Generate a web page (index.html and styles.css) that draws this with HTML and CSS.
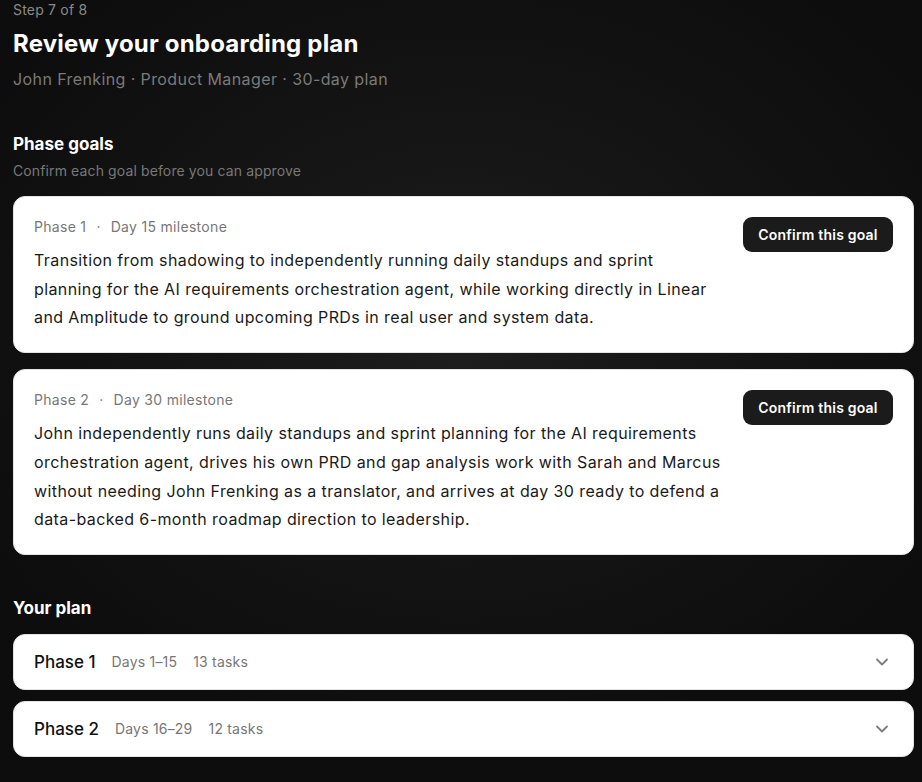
FILE: index.html
```html
<!DOCTYPE html>
<html lang="en">
<head>
<meta charset="utf-8">
<title>Review your onboarding plan</title>
<link rel="stylesheet" href="styles.css">
</head>
<body>
<main class="page">
  <header class="intro">
    <div class="step">Step 7 of 8</div>
    <h1 class="title">Review your onboarding plan</h1>
    <div class="subtitle">John Frenking · Product Manager · 30-day plan</div>
  </header>

  <section class="section">
    <h2 class="section-title">Phase goals</h2>
    <p class="section-hint">Confirm each goal before you can approve</p>

    <div class="goal-list">
      <article class="goal-card">
        <div class="goal-body">
          <div class="goal-meta"><span>Phase 1</span><span class="dot">·</span><span>Day 15 milestone</span></div>
          <p class="goal-text">Transition from shadowing to independently running daily standups and sprint planning for the AI requirements orchestration agent, while working directly in Linear and Amplitude to ground upcoming PRDs in real user and system data.</p>
        </div>
        <button class="confirm-btn" type="button">Confirm this goal</button>
      </article>

      <article class="goal-card">
        <div class="goal-body">
          <div class="goal-meta"><span>Phase 2</span><span class="dot">·</span><span>Day 30 milestone</span></div>
          <p class="goal-text">John independently runs daily standups and sprint planning for the AI requirements orchestration agent, drives his own PRD and gap analysis work with Sarah and Marcus without needing John Frenking as a translator, and arrives at day 30 ready to defend a data-backed 6-month roadmap direction to leadership.</p>
        </div>
        <button class="confirm-btn" type="button">Confirm this goal</button>
      </article>
    </div>
  </section>

  <section class="section">
    <h2 class="section-title">Your plan</h2>
    <div class="plan-list">
      <div class="plan-row">
        <span class="plan-name">Phase 1</span>
        <span class="plan-info">Days 1–15</span>
        <span class="plan-info">13 tasks</span>
        <svg class="chevron" width="16" height="16" viewBox="0 0 16 16" aria-hidden="true"><path d="M3 5.5 8 10.5l5-5" fill="none" stroke="currentColor" stroke-width="1.8" stroke-linecap="round" stroke-linejoin="round"/></svg>
      </div>
      <div class="plan-row">
        <span class="plan-name">Phase 2</span>
        <span class="plan-info">Days 16–29</span>
        <span class="plan-info">12 tasks</span>
        <svg class="chevron" width="16" height="16" viewBox="0 0 16 16" aria-hidden="true"><path d="M3 5.5 8 10.5l5-5" fill="none" stroke="currentColor" stroke-width="1.8" stroke-linecap="round" stroke-linejoin="round"/></svg>
      </div>
    </div>
  </section>
</main>
</body>
</html>
```

FILE: styles.css
```css
* {
  box-sizing: border-box;
}

html,
body {
  margin: 0;
  min-height: 100%;
}

body {
  font-family: Inter, "Noto Sans", "Liberation Sans", sans-serif;
  color: #fff;
  background-color: #0e0e0e;
  background-image: radial-gradient(ellipse 60% 55% at 50% 42%, #1e1e1e 0%, #151515 45%, #0d0d0d 100%);
  min-height: 782px;
}

.page {
  padding: 0 8px 24px 13px;
}

.step {
  font-size: 14px;
  line-height: 20px;
  letter-spacing: 0.2px;
  color: #8a8a8a;
}

.title {
  margin: 8px 0 0;
  font-size: 24px;
  line-height: 32px;
  font-weight: 700;
  letter-spacing: 0.2px;
  color: #fff;
}

.subtitle {
  margin-top: 7px;
  font-size: 16px;
  line-height: 24px;
  letter-spacing: 0.4px;
  color: #7a7a7a;
}

.section {
  margin-top: 41px;
}

.section-title {
  margin: 0;
  font-size: 17px;
  line-height: 24px;
  font-weight: 700;
  color: #fff;
}

.section-hint {
  margin: 5px 0 0;
  font-size: 14px;
  line-height: 20px;
  letter-spacing: 0.12px;
  color: #787878;
}

.goal-list {
  margin-top: 15px;
  display: flex;
  flex-direction: column;
  gap: 16px;
}

.goal-card {
  display: flex;
  align-items: flex-start;
  gap: 18px;
  padding: 20px;
  background: #fff;
  border: 1px solid #e4e4e4;
  border-radius: 12px;
  color: #1a1a1a;
}

.goal-body {
  flex: 1;
  min-width: 0;
}

.goal-meta {
  display: flex;
  gap: 10px;
  font-size: 14px;
  line-height: 20px;
  letter-spacing: 0.3px;
  color: #777;
}

.goal-text {
  margin: 9px 0 0;
  font-size: 16px;
  line-height: 28.7px;
  letter-spacing: 0.4px;
  color: #1a1a1a;
}

.confirm-btn {
  flex: none;
  width: 150px;
  height: 35px;
  border: 0;
  border-radius: 9px;
  background: #1b1b1b;
  color: #fff;
  font-family: inherit;
  font-size: 14px;
  font-weight: 600;
  letter-spacing: 0.2px;
  cursor: pointer;
}

.plan-list {
  margin-top: 14px;
  display: flex;
  flex-direction: column;
  gap: 11px;
}

.plan-row {
  display: flex;
  align-items: center;
  gap: 16px;
  height: 56px;
  padding: 0 23px 0 20px;
  background: #fff;
  border: 1px solid #e4e4e4;
  border-radius: 12px;
}

.plan-name {
  font-size: 17px;
  font-weight: 500;
  color: #111;
}

.plan-info {
  font-size: 14px;
  letter-spacing: 0.2px;
  color: #777;
}

.chevron {
  margin-left: auto;
  color: #7d7d7d;
}
```
